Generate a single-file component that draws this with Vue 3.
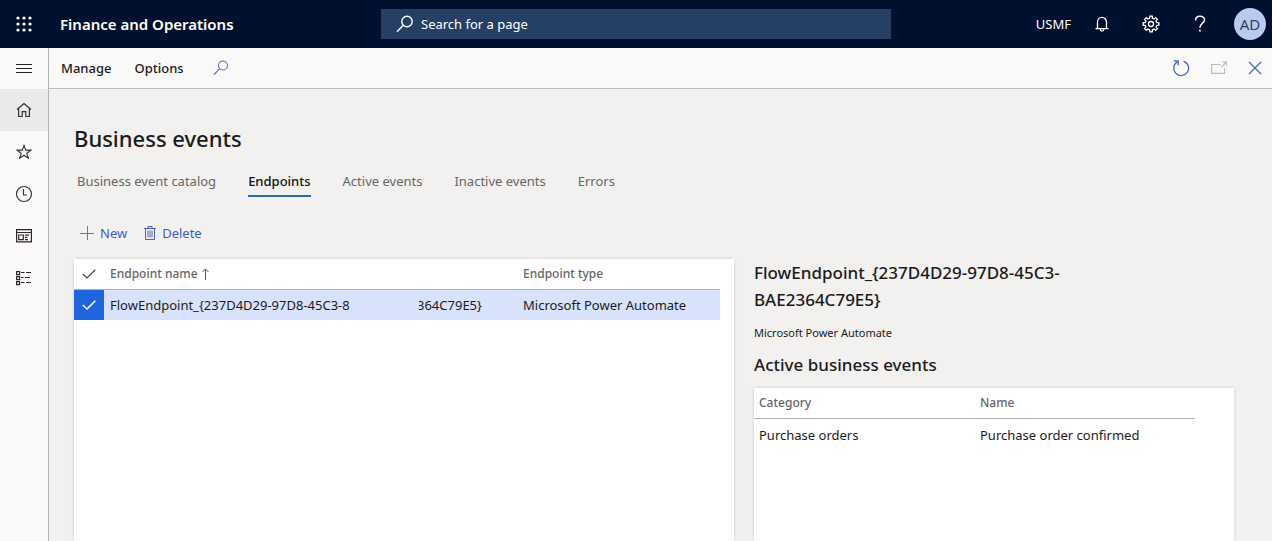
<script setup>
import { ref } from 'vue'

const tabs = ['Business event catalog', 'Endpoints', 'Active events', 'Inactive events', 'Errors']
const activeTab = ref('Endpoints')
const selected = ref(true)
const query = ref('')
const dots = [2, 8, 14]
const teeth = [0, 45, 90, 135, 180, 225, 270, 315]
</script>

<template>
  <div class="app">
    <header class="topbar">
      <button class="icon-btn waffle" aria-label="App launcher">
        <svg width="16" height="16" viewBox="0 0 16 16" fill="#fff">
          <template v-for="y in dots" :key="y">
            <circle v-for="x in dots" :key="x" :cx="x" :cy="y" r="1.6" />
          </template>
        </svg>
      </button>
      <a class="brand" href="#">Finance and Operations</a>
      <label class="search">
        <svg width="18" height="18" viewBox="0 0 18 18" fill="none" stroke="#fff" stroke-width="1.4">
          <circle cx="11" cy="6.5" r="5.2" />
          <path d="M7.3 10.3 1 16.8" />
        </svg>
        <input v-model="query" type="text" placeholder="Search for a page" aria-label="Search for a page" />
      </label>
      <div class="top-actions">
        <button class="company">USMF</button>
        <button class="icon-btn" aria-label="Notifications">
          <svg width="16" height="16" viewBox="0 0 16 16" fill="none" stroke="#fff" stroke-width="1.3">
            <path d="M3.5 12.5V6.2a4.5 4.8 0 0 1 9 0v6.3M1.5 12.7h13M6.3 13v.6a1.7 1.5 0 0 0 3.4 0V13" />
          </svg>
        </button>
        <button class="icon-btn" aria-label="Settings">
          <svg width="18" height="18" viewBox="-9 -9 18 18" fill="none" stroke="#fff" stroke-width="1.3">
            <path
              v-for="angle in teeth"
              :key="angle"
              :transform="`rotate(${angle})`"
              d="M-2.5 -5.3 -1.4 -5.8 -1.3 -7.8H1.3L1.4 -5.8 2.5 -5.3"
            />
            <circle r="2.5" />
          </svg>
        </button>
        <button class="icon-btn" aria-label="Help">
          <svg width="12" height="18" viewBox="0 0 12 18" fill="none" stroke="#fff" stroke-width="1.4">
            <path d="M1.5 5.5C1.5 2.6 3.3 1.2 5.9 1.2S10.5 2.7 10.5 5C10.5 8.5 5.9 8.3 5.9 12.7" />
            <path d="M5.9 14.7v1.8" stroke-width="1.7" />
          </svg>
        </button>
        <button class="avatar" aria-label="Account AD">AD</button>
      </div>
    </header>

    <div class="shell">
      <nav class="rail" aria-label="Main">
        <button class="rail-btn expand" aria-label="Expand navigation">
          <svg width="16" height="9" viewBox="0 0 16 9" stroke="#222" stroke-width="1"><path d="M0 .5h16M0 4.5h16M0 8.5h16" /></svg>
        </button>
        <button class="rail-btn current" aria-label="Home">
          <svg width="16" height="16" viewBox="0 0 16 16" fill="none" stroke="#333" stroke-width="1.2">
            <path d="M1 7.500 8 1.500l7 6M2.600 6.500v8h3.600V9.600h3.600v4.900h3.600v-8" />
          </svg>
        </button>
        <button class="rail-btn" aria-label="Favorites">
          <svg width="16" height="16" viewBox="0 0 16 16" fill="none" stroke="#333" stroke-width="1.1">
            <path d="M8 1.300 9.700 6.100h5.100l-4.100 3.100 1.600 5L8 11.200l-4.300 3 1.600-5L1.200 6.100h5.100z" />
          </svg>
        </button>
        <button class="rail-btn" aria-label="Recent">
          <svg width="18" height="18" viewBox="0 0 18 18" fill="none" stroke="#333" stroke-width="1.2">
            <circle cx="9" cy="9" r="7.5" /><path d="M8.500 4v6h3.500" />
          </svg>
        </button>
        <button class="rail-btn" aria-label="Workspaces">
          <svg width="16" height="14" viewBox="0 0 16 14" fill="none" stroke="#302530" stroke-width="1.2">
            <path d="M.6 .6h14.800v12.300H.6zM.6 3.500h14.800M2.700 6h4.600v4.700H2.700zM9 6.200h4M9 8.400h2.300M9 10.600h3" />
          </svg>
        </button>
        <button class="rail-btn" aria-label="Modules">
          <svg width="16" height="16" viewBox="0 0 16 16" fill="none" stroke="#302530" stroke-width="1.2">
            <path d="M.6 1.600h3v3h-3zM.6 6.600h3v3h-3zM.6 11.600h3v3h-3zM5 2.500h3.500M10 2.500h5M5 7.500h2.500M9 7.500h5M5 12.500h3.500M10 12.500h5" />
          </svg>
        </button>
      </nav>

      <div class="workspace">
        <div class="action-pane">
          <button class="menu">Manage</button>
          <button class="menu">Options</button>
          <button class="icon-btn find" aria-label="Search actions">
            <svg width="16" height="16" viewBox="0 0 16 16" fill="none" stroke="#5968bd" stroke-width="1.1">
              <circle cx="10" cy="5.5" r="4.5" /><path d="M6.800 8.800 1 14.500" />
            </svg>
          </button>
          <div class="window-actions">
            <button class="icon-btn" aria-label="Refresh">
              <svg width="18" height="18" viewBox="0 0 18 18" fill="none" stroke="#4664c4" stroke-width="1.3">
                <path d="M11.500 2.100A7.400 7.400 0 1 1 5.200 2.900M1.800 1.800h4.400v4.400" />
              </svg>
            </button>
            <button class="icon-btn" aria-label="Open in new window" disabled>
              <svg width="16" height="14" viewBox="0 0 16 14" fill="none" stroke="#bdbbb9" stroke-width="1.1">
                <path d="M10 3.500H.6v8.900h13V7M10.500 6l4.500-4.500M11.800 1.100H15.400v3.600" />
              </svg>
            </button>
            <button class="icon-btn" aria-label="Close">
              <svg width="14" height="14" viewBox="0 0 14 14" stroke="#4664c4" stroke-width="1.2"><path d="m1 1 12 12M13 1 1 13" /></svg>
            </button>
          </div>
        </div>

        <main class="page">
          <h1>Business events</h1>
          <div class="tabs" role="tablist">
            <button
              v-for="tab in tabs"
              :key="tab"
              class="tab"
              :class="{ active: tab === activeTab }"
              role="tab"
              :aria-selected="tab === activeTab"
              @click="activeTab = tab"
            >{{ tab }}</button>
          </div>

          <div class="toolbar">
            <button class="command">
              <svg width="14" height="14" viewBox="0 0 14 14" stroke="#5f74cc" stroke-width="1"><path d="M7.500 0v14M0 7.500h14" /></svg>
              New
            </button>
            <button class="command">
              <svg width="12" height="14" viewBox="0 0 12 14" fill="none" stroke="#4f63c4" stroke-width="1">
                <path d="M0 2.500h12M4 2.500v-2h4v2M1.500 2.500v11h9v-11M4 4.500v7M6 4.500v7M8 4.500v7" />
              </svg>
              Delete
            </button>
          </div>

          <div class="columns">
            <section class="card endpoints" aria-label="Endpoints">
              <table>
                <colgroup><col class="col-check" /><col class="col-endpoint" /><col /></colgroup>
                <thead>
                  <tr>
                    <th scope="col" class="check-cell">
                      <button class="icon-btn select-all" aria-label="Select all">
                        <svg width="14" height="10" viewBox="0 0 14 10" fill="none" stroke="#444" stroke-width="1.2"><path d="M.8 5 5 9 13.300.8" /></svg>
                      </button>
                    </th>
                    <th scope="col">
                      <span class="sorted">Endpoint name
                        <svg width="8" height="12" viewBox="0 0 8 12" fill="none" stroke="#555" stroke-width="1"><path d="M3.500 12V1M.5 4l3-3 3 3" /></svg>
                      </span>
                    </th>
                    <th scope="col">Endpoint type</th>
                  </tr>
                </thead>
                <tbody>
                  <tr :class="{ selected }">
                    <td class="check-cell">
                      <label class="check">
                        <input v-model="selected" type="checkbox" aria-label="Select endpoint" />
                        <svg width="14" height="10" viewBox="0 0 14 10" fill="none" stroke="#fff" stroke-width="1.5"><path d="M.8 5 5 9 13.300.8" /></svg>
                      </label>
                    </td>
                    <td>
                      <div class="masked">
                        <span class="mask-start">FlowEndpoint_{237D4D29-97D8-45C3-8</span>
                        <span class="mask-end">364C79E5}</span>
                      </div>
                    </td>
                    <td>Microsoft Power Automate</td>
                  </tr>
                </tbody>
              </table>
            </section>

            <section class="details">
              <h2>FlowEndpoint_{237D4D29-97D8-45C3-BAE2364C79E5}</h2>
              <p>Microsoft Power Automate</p>
              <h2>Active business events</h2>
              <div class="card events">
                <table>
                  <colgroup><col class="col-category" /><col /></colgroup>
                  <thead><tr><th scope="col">Category</th><th scope="col">Name</th></tr></thead>
                  <tbody><tr><td>Purchase orders</td><td>Purchase order confirmed</td></tr></tbody>
                </table>
              </div>
            </section>
          </div>
        </main>
      </div>
    </div>
  </div>
</template>

<style>
body { margin: 0; }
</style>

<style scoped>
.app {
  display: flex;
  flex-direction: column;
  min-height: 100vh;
  font: 13px/20px "Noto Sans", "Open Sans", sans-serif;
  color: #1b1b1b;
  background: #f2f1f0;
}
* { box-sizing: border-box; }
button { font: inherit; color: inherit; background: none; border: 0; padding: 0; }
svg { display: block; flex: none; }
h1, h2, p { margin: 0; }
.icon-btn { display: flex; align-items: center; justify-content: center; }

.topbar {
  display: grid;
  grid-template-columns: 48px 333px minmax(200px, 510px) minmax(240px, 1fr);
  align-items: center;
  height: 48px;
  background: #00112f;
  color: #fff;
}
.waffle { height: 48px; }
.brand { padding-left: 12px; color: #fff; font-size: 15px; font-weight: 600; text-decoration: none; white-space: nowrap; }
.search { display: flex; align-items: center; gap: 7px; height: 30px; padding-left: 15px; background: #263f65; }
.search input { flex: 1; min-width: 0; padding: 0; border: 0; outline: 0; background: none; color: #fff; font: inherit; }
.search input::placeholder { color: #fff; opacity: 1; }
.top-actions { display: flex; align-items: center; justify-content: flex-end; padding-right: 6px; }
.top-actions .icon-btn { width: 49px; height: 48px; }
.company { margin-right: 6px; }
.avatar { width: 32px; height: 32px; margin-left: 10px; border-radius: 50%; background: #b9c9f0; color: #34405c; font-size: 15px; }

.shell { display: flex; flex: 1; }
.rail { display: flex; flex-direction: column; width: 49px; flex: none; background: #fbfaf8; border-right: 1px solid #b5b4b3; }
.rail-btn { display: flex; align-items: center; justify-content: center; height: 42px; }
.rail-btn.expand { height: 41px; }
.rail-btn.current { background: #ebeae9; }
.workspace { display: flex; flex-direction: column; flex: 1; min-width: 0; }
.action-pane { display: flex; align-items: center; height: 41px; padding: 0 10px 0 12px; background: #fbf9f8; border-bottom: 1px solid #bdbcbb; }
.menu { margin-right: 23px; font-weight: 500; }
.find { margin-left: 6px; }
.window-actions { display: flex; gap: 21px; margin-left: auto; }

.page { display: flex; flex-direction: column; flex: 1; padding: 33px 38px 0 25px; }
h1 { font-size: 22px; line-height: 32px; font-weight: 500; }
.tabs { display: flex; gap: 32px; margin-top: 13px; padding-left: 3px; }
.tab { height: 30px; padding: 0; border-bottom: 2px solid transparent; color: #666; }
.tab.active { color: #111; font-weight: 500; border-color: #2f68ad; }
.toolbar { display: flex; gap: 17px; margin-top: 26px; padding-left: 6px; color: #3c5bc8; }
.command { display: flex; align-items: center; gap: 6px; }

.columns { display: grid; grid-template-columns: minmax(0, 660fr) minmax(0, 480fr); flex: 1; gap: 20px; margin-top: 16px; }
.card { background: #fff; box-shadow: 0 0 3px rgba(0, 0, 0, 0.16); }
.endpoints { padding-right: 14px; }
.details { display: flex; flex-direction: column; }
table { width: 100%; table-layout: fixed; border-collapse: collapse; }
th { height: 30px; padding: 0 6px; border-bottom: 1px solid #b3b2b1; color: #666; font-size: 12px; font-weight: 500; text-align: left; }
td { height: 30px; padding: 0 6px; white-space: nowrap; }
.check-cell { padding: 0; }
.col-check { width: 30px; }
.col-endpoint { width: 413px; }
.select-all { width: 30px; height: 30px; }
.sorted { display: flex; align-items: center; gap: 4px; }
.selected { background: #d8e2fb; }
.check { position: relative; display: flex; align-items: center; justify-content: center; height: 30px; }
.check input { position: absolute; inset: 0; width: 100%; height: 100%; margin: 0; appearance: none; }
.check svg { position: relative; pointer-events: none; }
.selected .check { background: #2165de; }
.masked { display: flex; gap: 70px; }
.masked span { display: flex; overflow: hidden; }
.mask-start { width: 239px; }
.mask-end { width: 63px; justify-content: flex-end; }

.details h2 { font-size: 17px; line-height: 27px; font-weight: 500; max-width: 360px; }
.details p { margin: 10px 0 8px; font-size: 11px; line-height: 20px; }
.events { flex: 1; margin-top: 10px; padding-right: 39px; }
.events th, .events td { padding: 0 5px; }
.events td { height: 34px; }
.col-category { width: 221px; }
</style>
